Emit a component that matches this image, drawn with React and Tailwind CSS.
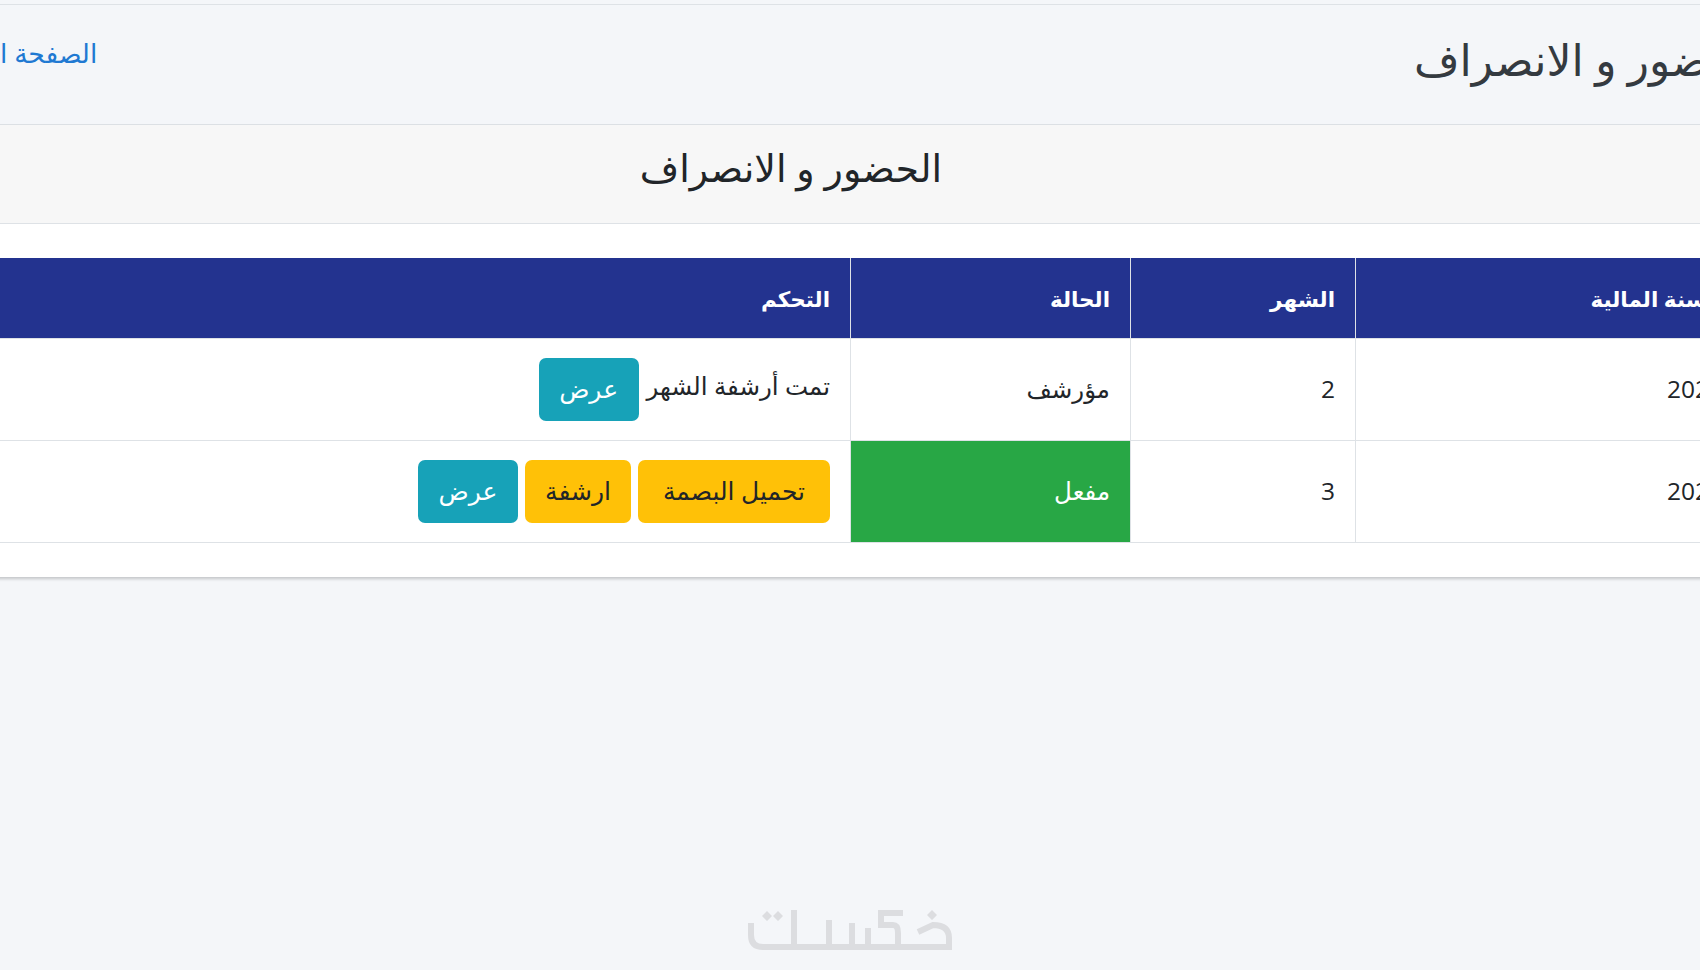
const arabic = { fontFamily: '"Open Sans", "DejaVu Sans", sans-serif' }

const rows = [
  { year: '2021', month: '2', status: 'مؤرشف', archived: true },
  { year: '2021', month: '3', status: 'مفعل', archived: false },
]

function Btn({ kind, width, children }) {
  const colors = kind === 'info' ? 'bg-[#17a2b8] text-white' : 'bg-[#ffc107] text-[#212529]'
  return (
    <button className={`${colors} ${width} h-[63px] rounded-[7px] text-[25px] whitespace-nowrap`}>
      {children}
    </button>
  )
}

function Logo() {
  return (
    <svg viewBox="0 0 204 40" className="w-[204px] h-[40px]" fill="none" stroke="#dcdde0" strokeWidth="6">
      <path d="M3 13v12q0 12 12 12H201V28q0-13-16-13l-15 7" />
      <path d="M46 0v37M81 10v27M104 13v24M120 18v19" />
      <path d="M155 3H133V15H145q5 0 5 8V37" />
      <path fill="#dcdde0" stroke="none" d="M19 1l5 5-5 5-5-5zM30 1l5 5-5 5-5-5zM184 0l5 5-5 5-5-5z" />
    </svg>
  )
}

export default function App() {
  return (
    <div dir="rtl" style={arabic} className="relative w-[1700px] h-[970px] overflow-hidden bg-[#f4f6f9] text-[#212529]">
      <div className="w-[1970px] -mr-[76px] pt-[4px]">
        <div className="h-[121px] border-y border-[#dee2e6] flex justify-between pr-[12px] pl-[110px] pt-[22px]">
          <h1 className="text-[44px] leading-[64px] text-[#343a40]">الحضور و الانصراف</h1>
          <a className="text-[26.5px] text-[#2079d2] leading-[52px] whitespace-nowrap">الصفحة الرئيسية</a>
        </div>
        <div className="bg-white shadow-[0_2px_3px_rgba(0,0,0,0.2)]">
          <div className="h-[99px] bg-[#f7f7f7] border-b border-[#dee2e6] flex justify-center pt-[12px]">
            <h2 className="text-[38px] leading-[60px]">الحضور و الانصراف</h2>
          </div>
          <div className="pr-[32px] pl-[33px] py-[34px]">
            <table className="w-full table-fixed border-collapse text-[24.5px]">
              <thead>
                <tr className="h-[80px] bg-[#23338f] text-white text-right text-[21.5px]">
                  <th className="w-[388px] px-[20px] pt-[2px] border-x border-[#dee2e6] font-bold">السنة المالية</th>
                  <th className="w-[225px] px-[20px] pt-[2px] border-x border-[#dee2e6] font-bold">الشهر</th>
                  <th className="w-[280px] px-[20px] pt-[2px] border-x border-[#dee2e6] font-bold">الحالة</th>
                  <th className="px-[20px] pt-[2px] border-x border-[#dee2e6] font-bold">التحكم</th>
                </tr>
              </thead>
              <tbody>
                {rows.map((r) => (
                  <tr key={r.month} className="h-[102px]">
                    <td className="px-[20px] border border-[#dee2e6]">{r.year}</td>
                    <td className="px-[20px] border border-[#dee2e6]">{r.month}</td>
                    {r.archived ? (
                      <td className="px-[20px] border border-[#dee2e6]">{r.status}</td>
                    ) : (
                      <td className="px-[20px] border border-[#dee2e6] bg-[#28a745] text-white">{r.status}</td>
                    )}
                    <td className="px-[20px] border border-[#dee2e6]">
                      {r.archived ? (
                        <div className="flex items-center gap-[8px]">
                          <span className="-mt-[6px]">تمت أرشفة الشهر</span>
                          <Btn kind="info" width="w-[100px]">عرض</Btn>
                        </div>
                      ) : (
                        <div className="flex items-center gap-[7px]">
                          <Btn kind="warning" width="w-[192px]">تحميل البصمة</Btn>
                          <Btn kind="warning" width="w-[106px]">ارشفة</Btn>
                          <Btn kind="info" width="w-[100px]">عرض</Btn>
                        </div>
                      )}
                    </td>
                  </tr>
                ))}
              </tbody>
            </table>
          </div>
        </div>
      </div>
      <div className="absolute left-[748px] top-[910px]">
        <Logo />
      </div>
    </div>
  )
}
